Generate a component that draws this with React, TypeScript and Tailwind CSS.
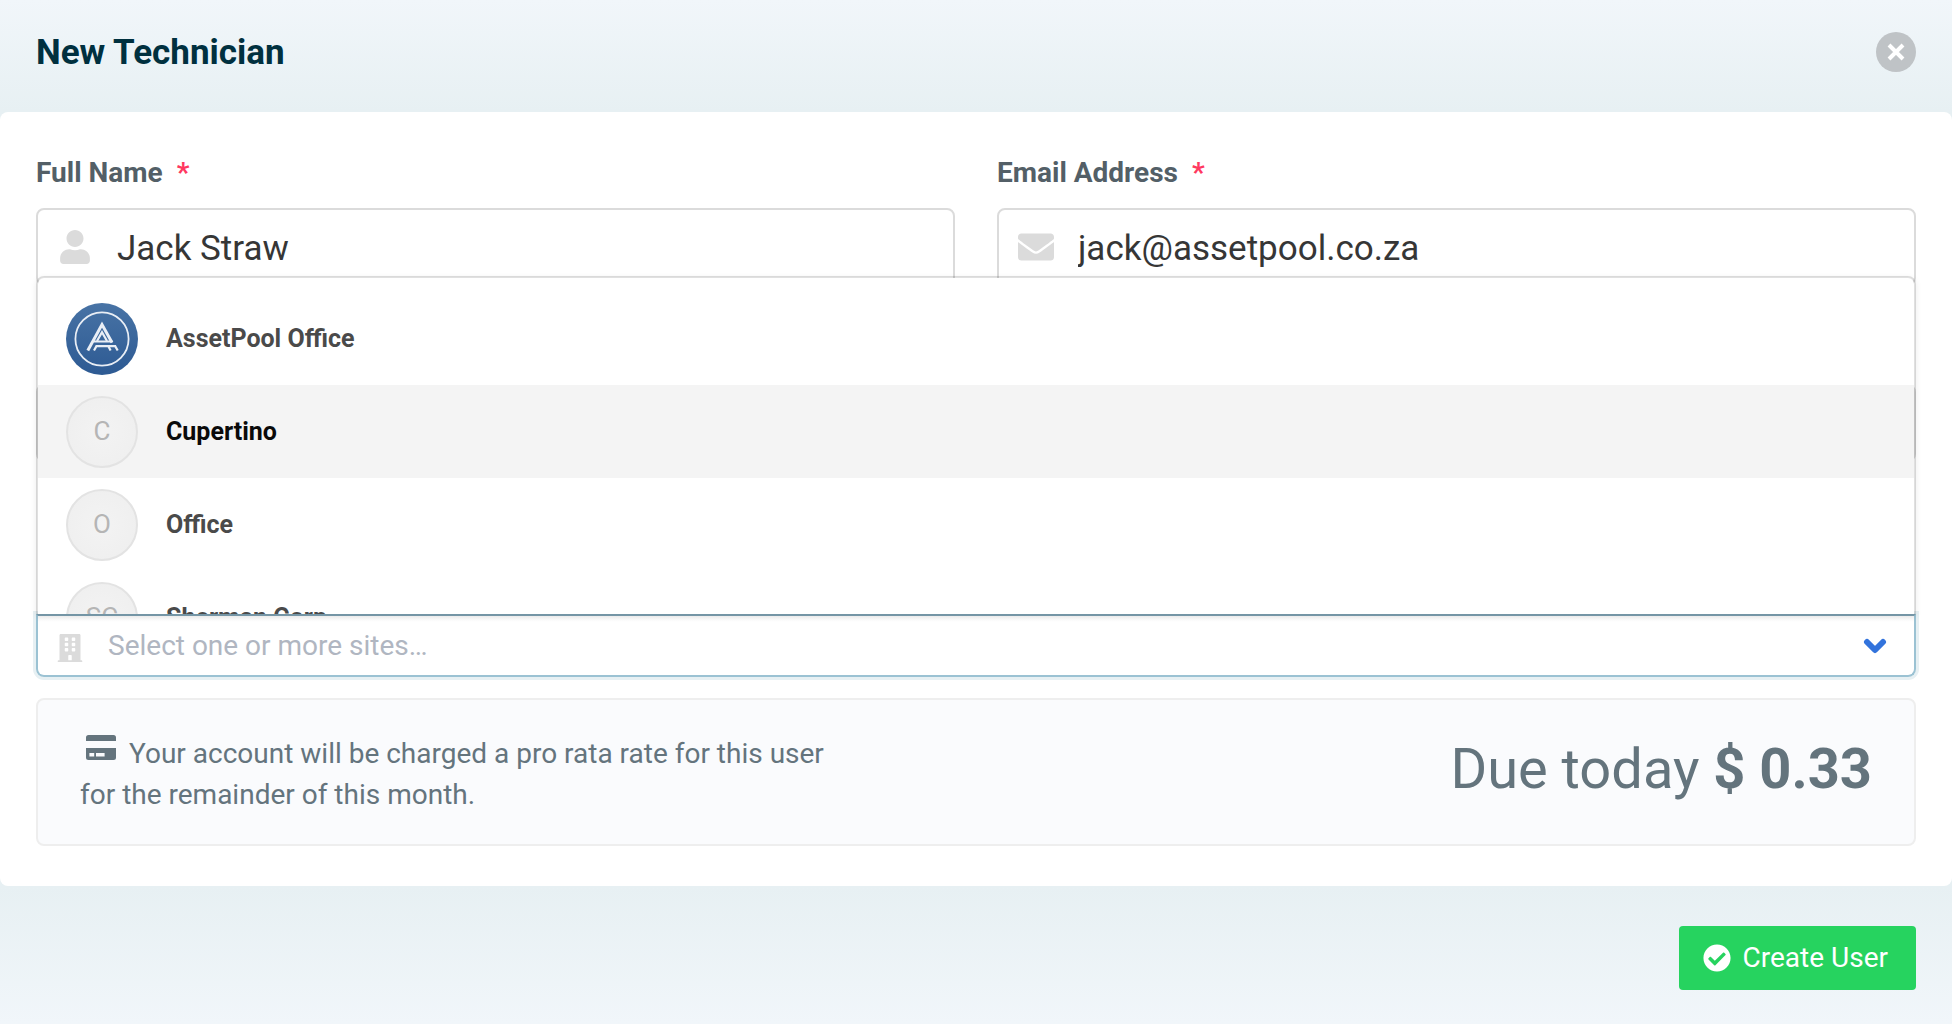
import { useState } from "react";
import { FaBuilding, FaCheckCircle, FaEnvelope, FaUser } from "react-icons/fa";
import { clsx } from "clsx";

type Site = { name: string; initials?: string };

const SITES: Site[] = [
  { name: "AssetPool Office" },
  { name: "Cupertino", initials: "C" },
  { name: "Office", initials: "O" },
  { name: "Sherman Corp", initials: "SC" },
];

function AssetPoolLogo() {
  return (
    <svg viewBox="0 0 72 72" className="size-[72px] shrink-0" aria-hidden="true">
      <defs>
        <linearGradient id="logo-bg" x1="0" y1="0" x2="0" y2="1">
          <stop offset="0" stopColor="#4873a5" />
          <stop offset="1" stopColor="#2d5a93" />
        </linearGradient>
      </defs>
      <circle cx="36" cy="36" r="36" fill="url(#logo-bg)" />
      <g fill="none" stroke="#e9eef5">
        <circle cx="36" cy="36" r="26.6" strokeWidth="1.8" />
        <path d="M21.8 47.5 36 21.5 46 39.5" strokeWidth="3" />
        <path d="M27.5 38.6H46.5" strokeWidth="2" />
        <path d="M31 38 36 29.3 41 38" strokeWidth="2.2" />
        <path d="M28 47.5 30.4 43.2H49.2L51.7 47.5M42.3 43.2 44.6 47.5" strokeWidth="2.2" />
      </g>
    </svg>
  );
}

function CardIcon() {
  return (
    <svg viewBox="0 0 30 25" className="mr-[13px] mb-[3px] ml-[6px] inline h-[25px] w-[30px] fill-current align-baseline" aria-hidden="true">
      <path d="M2.5 0h25A2.5 2.5 0 0 1 30 2.5V6H0V2.5A2.5 2.5 0 0 1 2.5 0Z" />
      <path fillRule="evenodd" d="M0 13h30v9.5a2.5 2.5 0 0 1-2.5 2.5h-25A2.5 2.5 0 0 1 0 22.5ZM3.4 18v3.6h4.8V18ZM10 18v3.6h8.6V18Z" />
    </svg>
  );
}

function Field({ id, label, type, value, icon }: { id: string; label: string; type: string; value: string; icon: React.ReactNode }) {
  return (
    <div>
      <label htmlFor={id} className="block text-[28px] leading-[42px] font-bold text-[#535f67]">
        {label} <span className="ml-[7px] text-[#ff3860]">*</span>
      </label>
      <div className="mt-[14px] flex h-[78px] items-center rounded-lg border-2 border-[#dbdbdb] bg-white">
        <span className="flex w-[74px] shrink-0 justify-center text-[#dbdbdb]">{icon}</span>
        <input id={id} type={type} defaultValue={value} className="h-full min-w-0 flex-1 pt-0.5 pl-[5px] text-[35px] text-[#363636] outline-none" />
      </div>
    </div>
  );
}

function SiteOption({ site, active, onHover }: { site: Site; active: boolean; onHover: () => void }) {
  return (
    <li
      role="option"
      aria-selected={active}
      onMouseEnter={onHover}
      className={clsx("flex h-[93px] items-center gap-7 px-7", active ? "bg-[#f4f4f4] text-[#0a0a0a]" : "text-[#4a4a4a]")}
    >
      {site.initials ? (
        <span className="flex size-[72px] shrink-0 items-center justify-center rounded-full border-2 border-[#e3e3e3] bg-radial from-[#f3f3f3] to-[#eeeeee] text-[26px] text-[#b5b5b5]">
          {site.initials}
        </span>
      ) : (
        <AssetPoolLogo />
      )}
      <span className="text-[25px] leading-9 font-bold">{site.name}</span>
    </li>
  );
}

export default function App() {
  const [active, setActive] = useState(1);

  return (
    <form className="flex min-h-screen flex-col bg-white font-['Roboto',sans-serif]" onSubmit={(e) => e.preventDefault()}>
      <header className="flex h-28 items-start justify-between bg-linear-to-b from-[#f1f6fa] to-[#e7f0f3] px-9 pt-8">
        <h1 className="text-[35px] leading-[42px] font-bold text-[#00303f]">New Technician</h1>
        <button type="button" aria-label="Close" className="flex size-10 items-center justify-center rounded-full bg-[#bfc3c6]">
          <svg viewBox="0 0 20 20" className="size-5 stroke-white stroke-4" aria-hidden="true">
            <path d="M3 3 17 17M17 3 3 17" />
          </svg>
        </button>
      </header>

      <main className="flex-1 bg-[#e7f0f3]">
        <div className="h-full rounded-lg bg-white px-9 pt-10 pb-10">
          <div className="grid grid-cols-2 gap-[42px]">
            <Field id="name" label="Full Name" type="text" value="Jack Straw" icon={<FaUser className="size-[34px]" />} />
            <Field id="email" label="Email Address" type="email" value="jack@assetpool.co.za" icon={<FaEnvelope className="size-9" />} />
          </div>
          {/* the open site list covers this row */}
          <div className="mt-[98px] h-[78px] rounded-lg border-2 border-[#dbdbdb]" />

          <div className="relative mt-[152px]">
            <ul
              role="listbox"
              id="site-list"
              aria-label="Sites"
              className="absolute inset-x-0 bottom-full h-[338px] overflow-hidden rounded-t-lg border-2 border-b-0 border-black/12 bg-white bg-clip-padding pt-[14px] shadow-[0_2px_6px_rgba(0,0,0,0.08)]"
            >
              {SITES.map((site, i) => (
                <SiteOption key={site.name} site={site} active={i === active} onHover={() => setActive(i)} />
              ))}
            </ul>
            <div className="flex h-[63px] items-center rounded-b-lg border-2 border-[#9bc2d3] border-t-[#7b9dae] bg-linear-to-b from-[#f4f4f4] to-white to-10% shadow-[0_0_0_3px_#e7f0f3]">
              <FaBuilding className="mt-1 ml-[18px] size-7 text-[#dbdbdb]" />
              <input
                type="text"
                role="combobox"
                aria-label="Sites"
                aria-expanded="true"
                aria-controls="site-list"
                placeholder="Select one or more sites…"
                className="ml-6 h-full min-w-0 flex-1 text-[28px] outline-none placeholder:text-[#b0b6c1]"
              />
              <svg viewBox="0 0 24 16" className="mr-[27px] h-4 w-6 fill-none stroke-[#3273dc] stroke-6" strokeLinecap="round" strokeLinejoin="round" aria-hidden="true">
                <path d="M4 4 12 12 20 4" />
              </svg>
            </div>
          </div>

          <div className="mt-[21px] flex h-[148px] items-center justify-between rounded-lg border-2 border-[#eeeeee] bg-[#fafbfd] px-[42px] text-[#64747d]">
            <p className="w-[760px] pt-1 text-[28px] leading-[41px]">
              <CardIcon />
              Your account will be charged a pro rata rate for this user for the remainder of this month.
            </p>
            <p className="pb-1.5 text-[56px] leading-[64px] whitespace-nowrap">
              Due today <strong className="font-bold">$ 0.33</strong>
            </p>
          </div>
        </div>
      </main>

      <footer className="flex h-[138px] items-start justify-end bg-linear-to-b from-[#e7f0f3] to-[#f1f6fa] px-9 pt-10">
        <button type="submit" className="flex h-16 items-center gap-3 rounded-sm bg-[#26d35f] pr-7 pl-6 text-[28px] text-white">
          <FaCheckCircle className="size-7" />
          Create User
        </button>
      </footer>
    </form>
  );
}
